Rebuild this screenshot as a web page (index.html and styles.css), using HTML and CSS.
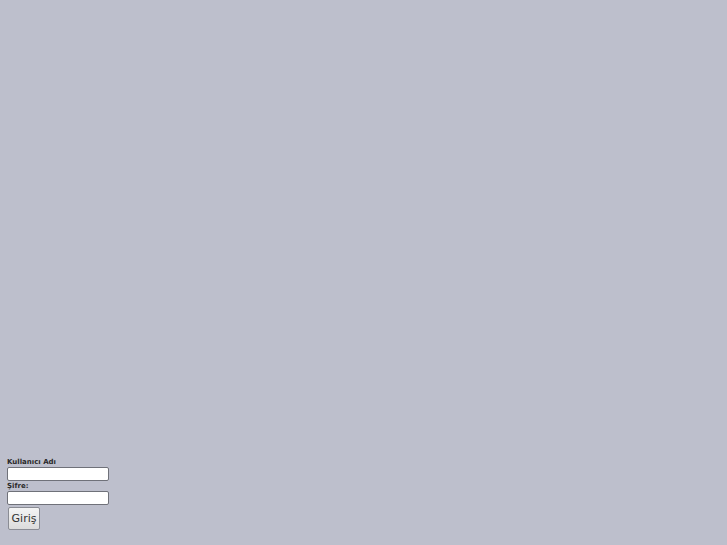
FILE: index.html
```html
<!DOCTYPE html>
<html lang="tr">
<head>
<meta charset="utf-8">
<link rel="stylesheet" href="styles.css">
</head>
<body>
<div class="page">
  <form class="login">
    <label class="lbl">Kullanıcı Adı</label>
    <input class="field" type="text">
    <label class="lbl">Şifre:</label>
    <input class="field" type="password">
    <button class="btn" type="button">Giriş</button>
  </form>
</div>
</body>
</html>
```
FILE: styles.css
```css
html, body {
  margin: 0;
  padding: 0;
  height: 100%;
  background: #bdbfcc;
}
.page {
  box-sizing: border-box;
  height: 100%;
  display: flex;
  flex-direction: column;
  justify-content: flex-end;
  padding: 0 7px 15px;
  font-family: "DejaVu Sans", sans-serif;
}
.login {
  display: flex;
  flex-direction: column;
  align-items: flex-start;
}
.lbl {
  font-size: 7px;
  font-weight: bold;
  color: #2a2a2a;
  line-height: 10px;
  height: 10px;
}
.field {
  box-sizing: border-box;
  width: 102px;
  height: 14px;
  margin: 0;
  padding: 0 2px;
  border: 1px solid #6f7179;
  border-radius: 2px;
  background: #fff;
}
.btn {
  box-sizing: border-box;
  margin: 2px 0 0 1px;
  width: 32px;
  height: 23px;
  padding: 0;
  font-family: "DejaVu Sans", sans-serif;
  font-size: 11px;
  color: #333;
  border: 1px solid #8a8c94;
  border-radius: 2px;
  background: linear-gradient(#f4f4f4, #dcdcdc);
}
```
